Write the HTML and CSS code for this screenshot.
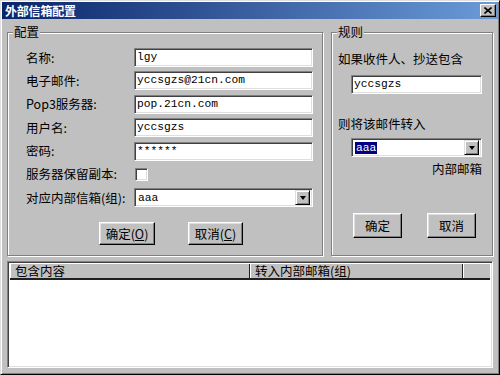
FILE: index.html
```html
<!DOCTYPE html>
<html>
<head>
<meta charset="UTF-8">
<title>外部信箱配置</title>
<link rel="stylesheet" href="styles.css">
</head>
<body>
<div class="window">
  <div class="titlebar">
    <span class="title">外部信箱配置</span>
    <span class="close">
      <svg width="8" height="7" viewBox="0 0 8 7"><path d="M0.5 0.5 L7.5 6.5 M7.5 0.5 L0.5 6.5" stroke="#000" stroke-width="1.6"/></svg>
    </span>
  </div>
  <div class="body">
    <div class="panes">
      <div class="group config">
        <span class="group-title">配置</span>
        <div class="form">
          <span class="label">名称:</span><div class="edit">lgy</div>
          <span class="label">电子邮件:</span><div class="edit">yccsgzs@21cn.com</div>
          <span class="label">Pop3服务器:</span><div class="edit">pop.21cn.com</div>
          <span class="label">用户名:</span><div class="edit">yccsgzs</div>
          <span class="label">密码:</span><div class="edit">******</div>
          <span class="label">服务器保留副本:</span><div><span class="check"></span></div>
          <span class="label">对应内部信箱(组):</span>
          <div class="combo"><span class="value">aaa</span><span class="drop"><i class="arrow"></i></span></div>
        </div>
        <div class="actions">
          <span class="btn btn-ok">确定(<u>O</u>)</span>
          <span class="btn btn-cancel">取消(<u>C</u>)</span>
        </div>
      </div>
      <div class="group rules">
        <span class="group-title">规则</span>
        <p class="text first">如果收件人、抄送包含</p>
        <div class="edit rule-edit">yccsgzs</div>
        <p class="text second">则将该邮件转入</p>
        <div class="combo rule-combo"><span class="value"><em class="sel">aaa</em></span><span class="drop"><i class="arrow"></i></span></div>
        <p class="text hint">内部邮箱</p>
        <div class="actions rule-actions">
          <span class="btn btn-small">确定</span>
          <span class="btn btn-small">取消</span>
        </div>
      </div>
    </div>
    <div class="list">
      <div class="list-head">
        <span class="col c1">包含内容</span>
        <span class="col c2">转入内部邮箱(组)</span>
        <span class="col c3"></span>
      </div>
      <div class="list-body"></div>
    </div>
  </div>
</div>
</body>
</html>
```
FILE: styles.css
```css
*{margin:0;padding:0;box-sizing:border-box}
html,body{width:500px;height:375px;overflow:hidden}
body{font:12.5px/14px "Noto Sans CJK SC",sans-serif;color:#000;background:#c0c0c0}

.window{width:500px;height:375px;background:#c0c0c0;border:1px solid;border-color:#dfdfdf #000 #000 #dfdfdf;box-shadow:inset 1px 1px #fff,inset -1px -1px #808080;padding:1px;display:flex;flex-direction:column}

.titlebar{height:17px;flex:none;background:linear-gradient(to right,#0a246a,#6b9bd8);display:flex;align-items:center;justify-content:space-between;padding:0 2px 0 3px}
.title{color:#fff;font-weight:bold;font-size:12px;letter-spacing:-0.2px}
.close{width:16px;height:13px;background:#c0c0c0;border:1px solid;border-color:#fff #000 #000 #fff;box-shadow:inset -1px -1px #808080;display:flex;align-items:center;justify-content:center}

.body{flex:1;padding:13px 5px 5px 5px;display:flex;flex-direction:column}
.panes{display:flex;gap:8px;height:224px;flex:none}

.group{border:1px solid #808080;box-shadow:inset 1px 1px #fff,1px 1px #fff;display:flex;flex-direction:column;align-items:flex-start}
.config{width:316px}
.rules{flex:1;padding:0 10px 0 6px}
.group-title{margin:-8px 0 0 5px;padding:0 1px;background:#c0c0c0;line-height:14px}
.rules .group-title{margin-left:-1px}

.form{display:grid;grid-template-columns:108px 179px;grid-auto-rows:19px;row-gap:4.4px;align-items:center;margin:9px 0 0 18px}
.label{white-space:nowrap}

.edit{height:19px;background:#fff;border:1px solid;border-color:#808080 #fff #fff #808080;box-shadow:inset 1px 1px #404040,inset -1px -1px #dfdfdf;font:11.25px/17px "Liberation Mono",monospace;padding:0 2px;white-space:nowrap}
.check{display:block;width:13px;height:13px;margin-left:1px;background:#fff;border:1px solid;border-color:#808080 #fff #fff #808080;box-shadow:inset 1px 1px #404040,inset -1px -1px #dfdfdf}

.combo{height:19px;background:#fff;border:1px solid;border-color:#808080 #fff #fff #808080;box-shadow:inset 1px 1px #404040,inset -1px -1px #dfdfdf;display:flex;align-items:center;padding:2px 2px 2px 2px}
.value{flex:1;font:11.25px/14px "Liberation Mono",monospace;padding-left:1px}
.drop{width:15px;height:15px;background:#c0c0c0;border:1px solid;border-color:#dfdfdf #000 #000 #dfdfdf;box-shadow:inset 1px 1px #fff,inset -1px -1px #808080;display:flex;align-items:center;justify-content:center}
.arrow{width:0;height:0;border-left:3.5px solid transparent;border-right:3.5px solid transparent;border-top:4px solid #000}
.sel{font-style:normal;background:#000080;color:#fff;padding:0 1px}

.actions{display:flex;gap:33px;margin:15px 0 0 91px}
.btn{height:23px;background:#c0c0c0;border:1px solid;border-color:#fff #000 #000 #fff;box-shadow:inset -1px -1px #808080,inset 1px 1px #dfdfdf;display:flex;align-items:center;justify-content:center;white-space:nowrap}
.btn u{text-decoration:underline}
.btn-ok{width:56px}
.btn-cancel{width:55px}

.text{line-height:14px}
.text.first{margin-top:12.5px}
.rule-edit{margin:9.5px 0 0 13px;align-self:stretch}
.text.second{margin-top:23px}
.rule-combo{margin:7px 0 0 13px;align-self:stretch}
.text.hint{margin-top:5px;align-self:flex-end}
.rule-actions{gap:25px;margin:37px 0 0 15px}
.btn-small{width:49px;height:25px}

.list{flex:1;margin-top:5px;background:#fff;border:1px solid;border-color:#808080 #fff #fff #808080;box-shadow:inset 1px 1px #404040,inset -1px -1px #dfdfdf;padding:2px 2px 2px 2px;display:flex;flex-direction:column}
.list-head{display:flex;height:16px;border-bottom:2px solid #202020;background:#c0c0c0}
.col{border-left:1px solid #fff;border-right:1px solid #202020;padding-left:4px;line-height:13px;white-space:nowrap}
.c1{width:240px}
.c2{width:213px}
.c3{flex:1;border-right:none}
.list-body{flex:1}
```
